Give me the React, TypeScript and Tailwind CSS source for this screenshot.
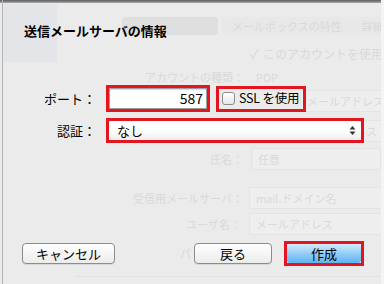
import React from 'react';

const jp = { fontFamily: '"Lucida Grande", "Noto Sans CJK JP", "Noto Sans", sans-serif' };

// faded window that shows through behind the sheet
function GhostWindow() {
  return (
    <div className="pointer-events-none absolute inset-0 select-none whitespace-nowrap text-[11px] text-[#d9d9d9]" style={jp}>
      <div className="absolute left-[3px] top-[4px] h-[58px] w-[54px] bg-[#e3e5e9]" />
      <div className="absolute left-[122px] top-[17px] h-[18px] w-[96px] rounded-sm bg-[#dfdfdf]" />
      <div className="absolute left-[222px] top-[17px] flex h-[18px] w-[160px] items-center gap-5 bg-[#e8e8e8] pl-[10px]">
        <span>メールボックスの特性</span>
        <span>詳細</span>
      </div>
      <div className="absolute left-[250px] top-[44px] flex items-center gap-1">
        <span className="text-[13px]">✓</span>
        <span className="text-[12px]">このアカウントを使用</span>
      </div>
      <div className="absolute left-[145px] top-[69px] flex gap-3">
        <span>アカウントの種類：</span>
        <span>POP</span>
      </div>
      <div className="absolute left-[300px] top-[90px] flex h-[22px] w-[82px] items-center border border-[#e4e4e4] bg-[#eeeeee] pl-[6px]">メールアドレス</div>
      <div className="absolute left-[300px] top-[120px] flex h-[22px] w-[82px] items-center justify-end border border-[#e4e4e4] bg-[#eeeeee] pr-[4px]">ス</div>
      <div className="absolute left-[210px] top-[148px] flex items-center gap-[8px]">
        <span>氏名：</span>
        <span className="flex h-[22px] w-[130px] items-center border border-[#e4e4e4] bg-[#eeeeee] pl-[6px]">任意</span>
      </div>
      <div className="absolute left-[133px] top-[187px] flex items-center gap-[6px]">
        <span>受信用メールサーバ：</span>
        <span className="flex h-[22px] w-[134px] items-center border border-[#e4e4e4] bg-[#eeeeee] pl-[6px]">mail.ドメイン名</span>
      </div>
      <div className="absolute left-[186px] top-[213px] flex items-center gap-[8px]">
        <span>ユーザ名：</span>
        <span className="flex h-[22px] w-[134px] items-center border border-[#e4e4e4] bg-[#eeeeee] pl-[6px]">メールアドレス</span>
      </div>
      <div className="absolute left-[180px] top-[245px]">パ</div>
      <div className="absolute left-[75px] top-[276px] h-px w-[306px] bg-[#e2e2e2]" />
    </div>
  );
}

function RedFrame({ className, children }: { className: string; children: React.ReactNode }) {
  return <div className={`border-[3px] border-[#e3161f] ${className}`}>{children}</div>;
}

function Button({ label, className }: { label: string; className: string }) {
  return (
    <button
      className={`flex h-[21px] items-center justify-center rounded-[4px] border border-[#8c8c8c] bg-gradient-to-b from-white to-[#ececec] text-[13px] text-black shadow-[0_1px_0_rgba(0,0,0,0.08)] ${className}`}
    >
      {label}
    </button>
  );
}

export default function App() {
  return (
    <div className="relative h-[284px] w-[384px] overflow-hidden bg-[#ebebeb]" style={jp}>
      <GhostWindow />
      {/* window chrome edges */}
      <div className="absolute left-0 top-0 h-[3px] w-[384px] bg-gradient-to-b from-[#5e5e5e] to-[#a9a9a9]" />
      <div className="absolute left-[2px] top-0 h-[284px] w-px bg-[#b4b4b4]" />
      <div className="absolute right-0 top-0 h-[284px] w-[3px] bg-[#f4f4f4]" />

      <div className="relative flex h-full flex-col whitespace-nowrap">
        <h1 className="ml-[24px] mt-[21px] text-[13px] font-bold leading-[20px] text-black">送信メールサーバの情報</h1>

        <div className="mt-[44px] flex items-center">
          <div className="w-[100px] pr-[4px] text-right text-[13px] text-black">ポート：</div>
          <RedFrame className="ml-[6px] h-[27px] w-[104px]">
            <div className="flex h-full items-center justify-end border border-[#9d9d9d] bg-white pr-[3px] text-[14px] text-black shadow-[inset_0_1px_1px_rgba(0,0,0,0.15)]">
              587
            </div>
          </RedFrame>
          <RedFrame className="ml-[6px] flex h-[26px] w-[90px] items-center gap-[4px] pl-[3px]">
            <span className="h-[13px] w-[13px] shrink-0 rounded-[3px] border border-[#8d8d8d] bg-gradient-to-b from-white to-[#e6e6e6]" />
            <span className="text-[12.5px] tracking-[-0.2px] text-black">SSL を使用</span>
          </RedFrame>
        </div>

        <div className="mt-[6px] flex items-center">
          <div className="w-[100px] pr-[4px] text-right text-[13px] text-black">認証：</div>
          <RedFrame className="ml-[6px] h-[25px] w-[258px]">
            <div className="flex h-full items-center justify-between rounded-[3px] bg-gradient-to-b from-white via-white to-[#eeeeee] pl-[8px] pr-[5px] text-[13px] text-black">
              <span>なし</span>
              <svg width="7" height="11" viewBox="0 0 7 11">
                <path d="M3.5 1 L6.5 4.5 L0.5 4.5 Z" fill="#333" />
                <path d="M3.5 10 L6.5 6.5 L0.5 6.5 Z" fill="#333" />
              </svg>
            </div>
          </RedFrame>
        </div>

        <div className="mt-[98px] flex items-center">
          <Button label="キャンセル" className="ml-[22px] w-[93px]" />
          <Button label="戻る" className="ml-[79px] w-[78px]" />
          <RedFrame className="ml-[12px] h-[25px] w-[80px]">
            <div className="flex h-full items-center justify-center rounded-[3px] bg-gradient-to-b from-[#d3ebfd] via-[#93cdf7] to-[#5fb2f1] text-[13px] text-black">
              作成
            </div>
          </RedFrame>
        </div>
      </div>
    </div>
  );
}
